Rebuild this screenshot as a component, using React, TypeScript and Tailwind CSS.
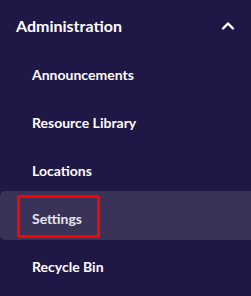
import React from 'react';

const items = ['Announcements', 'Resource Library', 'Locations', 'Settings', 'Recycle Bin'];

export default function App() {
  return (
    <div className="w-[251px] h-[296px] bg-[#1f1745] overflow-hidden font-['Lato',sans-serif] text-white">
      {/* section header */}
      <div className="h-[50px] flex items-center justify-between pl-4 pr-4 pt-[2px]">
        <span className="text-[16px] font-bold">Administration</span>
        <svg width="14" height="10" viewBox="0 0 14 10">
          <path d="M2 7.5 L7 2.5 L12 7.5" stroke="white" strokeWidth="2.4" fill="none" strokeLinecap="round" strokeLinejoin="round" />
        </svg>
      </div>

      <ul>
        {items.map((label) => {
          const active = label === 'Settings';
          return (
            <li
              key={label}
              className={
                'relative flex items-center pl-8 text-[14px] font-bold ' +
                (active ? 'h-[49px] bg-[#3b3357] rounded-l-[5px] -mt-[3px] mb-[2px] pt-[5px]' : 'h-12')
              }
            >
              <span className={active ? 'text-[#e6e4ee]' : ''}>{label}</span>
              {active && (
                <span className="absolute left-[17px] top-[4px] w-[83px] h-[43px] border-[3px] border-[#ff0000] rounded-[2px]" />
              )}
            </li>
          );
        })}
      </ul>
    </div>
  );
}
